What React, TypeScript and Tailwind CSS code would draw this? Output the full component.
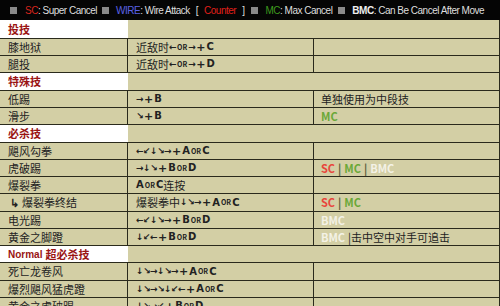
import React from 'react';

type Row =
  | { kind: 'section'; label: React.ReactNode; h: string }
  | { kind: 'move'; name: React.ReactNode; cmd: string; note?: React.ReactNode; h: string };

const ARROWS = '←↙↓↘→↖↑↗';

function Cmd({ text }: { text: string }) {
  const parts: React.ReactNode[] = [];
  let i = 0;
  while (i < text.length) {
    const ch = text[i];
    if (text.startsWith('or', i)) {
      parts.push(
        <span key={i} className="mx-[1px] text-[7px] font-bold uppercase leading-none">
          or
        </span>
      );
      i += 2;
      continue;
    }
    if (ARROWS.includes(ch)) {
      parts.push(
        <span key={i} className="w-[7px] text-center font-['DejaVu_Sans',sans-serif] text-[9px] font-bold leading-none">
          {ch}
        </span>
      );
    } else if (ch === '+') {
      parts.push(
        <span key={i} className="mx-[1px] font-['DejaVu_Sans',sans-serif] text-[11px] font-bold leading-none">
          +
        </span>
      );
    } else if ('ABCD'.includes(ch)) {
      parts.push(
        <span key={i} className="font-['DejaVu_Sans',sans-serif] text-[10px] font-bold leading-none">
          {ch}
        </span>
      );
    } else {
      parts.push(<span key={i}>{ch}</span>);
    }
    i++;
  }
  return <div className="flex items-center whitespace-nowrap">{parts}</div>;
}

const Sep = () => <span className="mx-[3px] font-bold text-[#5a5a3a]">|</span>;
const SC = () => <span className="font-bold text-[#e8463c]">SC</span>;
const MC = () => <span className="font-bold text-[#6aa838]">MC</span>;
const BMC = () => <span className="font-bold text-[#f4f2e6]">BMC</span>;

const rows: Row[] = [
  { kind: 'section', label: '投技', h: 'h-[19px]' },
  { kind: 'move', name: '膝地狱', cmd: '近敌时←or→+C', h: 'h-[17px]' },
  { kind: 'move', name: '腿投', cmd: '近敌时←or→+D', h: 'h-[17px]' },
  { kind: 'section', label: '特殊技', h: 'h-[18px]' },
  { kind: 'move', name: '低踢', cmd: '→+B', note: <span className="text-[#222]">单独使用为中段技</span>, h: 'h-[17px]' },
  { kind: 'move', name: '滑步', cmd: '↘+B', note: <MC />, h: 'h-[17px]' },
  { kind: 'section', label: '必杀技', h: 'h-[18px]' },
  { kind: 'move', name: '飓风勾拳', cmd: '←↙↓↘→+AorC', h: 'h-[17px]' },
  {
    kind: 'move',
    name: '虎破踢',
    cmd: '→↓↘+BorD',
    note: (
      <>
        <SC />
        <Sep />
        <MC />
        <Sep />
        <BMC />
      </>
    ),
    h: 'h-[17px]',
  },
  { kind: 'move', name: '爆裂拳', cmd: 'AorC连按', h: 'h-[17px]' },
  {
    kind: 'move',
    name: (
      <span className="flex items-center">
        <span className="ml-[2px] mr-[3px] font-bold">↳</span>爆裂拳终结
      </span>
    ),
    cmd: '爆裂拳中↓↘→+AorC',
    note: (
      <>
        <SC />
        <Sep />
        <MC />
      </>
    ),
    h: 'h-[18px]',
  },
  { kind: 'move', name: '电光踢', cmd: '←↙↓↘→+BorD', note: <BMC />, h: 'h-[17px]' },
  {
    kind: 'move',
    name: '黄金之脚蹬',
    cmd: '↓↙←+BorD',
    note: (
      <>
        <BMC />
        <span className="ml-[3px] text-[#222]">|击中空中对手可追击</span>
      </>
    ),
    h: 'h-[17px]',
  },
  {
    kind: 'section',
    label: (
      <>
        <span className="mr-[3px] font-['Liberation_Sans',sans-serif] text-[10px]">Normal</span>超必杀技
      </>
    ),
    h: 'h-[17px]',
  },
  { kind: 'move', name: '死亡龙卷风', cmd: '↓↘→↓↘→+AorC', h: 'h-[18px]' },
  { kind: 'move', name: '爆烈飓风猛虎蹬', cmd: '↓↘→↘↓↙←+AorC', h: 'h-[17px]' },
  { kind: 'move', name: '黄金之虎破踢', cmd: '↓↘→↙+BorD', h: 'h-[17px]' },
];

function Box({ className = '' }: { className?: string }) {
  return <span className={`mr-[7px] inline-block h-[7px] w-[7px] shrink-0 bg-[#8a8a8a] ${className}`} />;
}

function Legend() {
  return (
    <div className="flex h-[20px] items-center whitespace-pre bg-[#050505] pl-[10px] font-['Liberation_Sans',sans-serif] text-[10px] tracking-[-0.5px] text-[#dedede]">
      <Box className="mr-[8px]" />
      <span className="text-[#d8241c]">SC</span>
      <span>: Super Cancel</span>
      <Box className="ml-[5px] mr-[6px]" />
      <span className="text-[#5a62e6]">WIRE</span>
      <span>: Wire Attack</span>
      <span className="ml-[6px]">[</span>
      <span className="mx-[6px] text-[#e0201a]">Counter</span>
      <span>]</span>
      <Box className="ml-[7px] mr-[6px]" />
      <span className="text-[#3e9a1e]">MC</span>
      <span>: Max Cancel</span>
      <Box className="ml-[6px] mr-[6px]" />
      <span className="font-bold text-[#eeeeee]">BMC</span>
      <span>: Can Be Cancel After Move</span>
    </div>
  );
}

export default function App() {
  return (
    <div className="h-[306px] w-[500px] overflow-hidden bg-[#d3cfa5] font-['Noto_Sans_CJK_SC',sans-serif] text-[11px] text-[#222]">
      <Legend />
      <div className="w-[500px] border-r border-[#2a2a1c]">
        {rows.map((r, idx) =>
          r.kind === 'section' ? (
            <div key={idx} className={`flex border-b border-[#2a2a1c] ${r.h}`}>
              <div className="flex w-[128px] items-center bg-white pl-[8px] font-bold text-[#9a1414]">
                {r.label}
              </div>
              <div className="flex-1" />
            </div>
          ) : (
            <div key={idx} className={`flex border-b border-[#2a2a1c] ${r.h}`}>
              <div className="flex w-[128px] items-center border-r border-[#2a2a1c] pl-[8px]">{r.name}</div>
              <div className="flex w-[186px] items-center border-r border-[#2a2a1c] pl-[8px]">
                <Cmd text={r.cmd} />
              </div>
              <div className="flex flex-1 items-center pl-[7px]">{r.note}</div>
            </div>
          )
        )}
      </div>
    </div>
  );
}
